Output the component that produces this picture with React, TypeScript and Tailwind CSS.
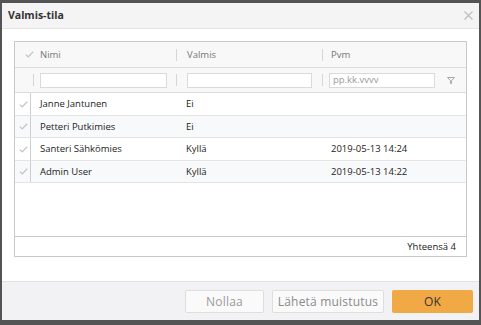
import React from "react";

const rows = [
  { name: "Janne Jantunen", valmis: "Ei", pvm: "", cls: "h-[23px] bg-white" },
  { name: "Petteri Putkimies", valmis: "Ei", pvm: "", cls: "h-[22px] bg-[#f8f9fb]" },
  { name: "Santeri Sähkömies", valmis: "Kyllä", pvm: "2019-05-13 14:24", cls: "h-[23px] bg-white" },
  { name: "Admin User", valmis: "Kyllä", pvm: "2019-05-13 14:22", cls: "h-[22px] bg-[#f8f9fb]" },
];

function Check({ className = "" }: { className?: string }) {
  return (
    <svg width="9" height="7" viewBox="0 0 9 7" className={className}>
      <path d="M0.8 3.6 L3.2 5.9 L8.2 0.8" fill="none" stroke="#c4c4c4" strokeWidth="1.3" />
    </svg>
  );
}

function Sep() {
  return <div className="w-px h-[12px] bg-[#d6d6d6]" />;
}

export default function App() {
  return (
    <div
      className="w-[481px] h-[325px] bg-[#545454] pt-[3px] pl-[2px] pr-[2px] pb-[5px]"
      style={{ fontFamily: '"Open Sans", "Noto Sans", sans-serif' }}
    >
      <div className="h-full bg-white flex flex-col">
        {/* header */}
        <div className="h-[26px] shrink-0 bg-[#f4f4f4] border-b border-[#e4e4e4] flex items-center justify-between pl-[6px] pr-[6px]">
          <span className="text-[10.5px] font-bold text-[#333] leading-none">Valmis-tila</span>
          <svg width="9" height="9" viewBox="0 0 9 9">
            <path d="M0.5 0.5 L8.5 8.5 M8.5 0.5 L0.5 8.5" stroke="#bdbdbd" strokeWidth="1.2" />
          </svg>
        </div>
        {/* body */}
        <div className="flex-1 px-[12px] pt-[12px] pb-[24px] flex flex-col">
          <div className="flex-1 border border-[#c9c9c9] flex flex-col text-[9.5px] leading-none">
            {/* grid header */}
            <div className="h-[26px] shrink-0 bg-[#f8f8f8] border-b border-[#dcdcdc] flex items-center text-[#777]">
              <div className="w-[25px] shrink-0 flex justify-end pr-[6px]">
                <Check />
              </div>
              <div className="w-[136px] shrink-0 flex items-center">
                <span>Nimi</span>
              </div>
              <div className="w-[146px] shrink-0 flex items-center">
                <Sep />
                <span className="ml-[10px]">Valmis</span>
              </div>
              <div className="flex-1 flex items-center">
                <Sep />
                <span className="ml-[8px]">Pvm</span>
              </div>
            </div>
            {/* filter row */}
            <div className="h-[25px] shrink-0 bg-[#f8f8f8] border-b border-[#dcdcdc] flex items-center">
              <div className="w-[18px] shrink-0" />
              <Sep />
              <div className="w-[6px] shrink-0" />
              <div className="w-[127px] shrink-0 h-[15px] bg-white border border-[#dadada]" />
              <div className="w-[9px] shrink-0" />
              <Sep />
              <div className="w-[10px] shrink-0" />
              <div className="w-[125px] shrink-0 h-[15px] bg-white border border-[#dadada]" />
              <div className="w-[10px] shrink-0" />
              <Sep />
              <div className="w-[6px] shrink-0" />
              <div className="w-[106px] shrink-0 h-[15px] bg-white border border-[#dadada] flex items-center pl-[3px] text-[#9a9a9a]">
                pp.kk.vvvv
              </div>
              <div className="flex-1 flex justify-center">
                <svg width="8" height="7" viewBox="0 0 8 7">
                  <path d="M0.5 0.5 H7.5 L4.6 3.6 V6.5 H3.4 V3.6 Z" fill="none" stroke="#9f9f9f" strokeWidth="0.9" />
                </svg>
              </div>
            </div>
            {/* data rows */}
            {rows.map((r) => (
              <div key={r.name} className={`${r.cls} shrink-0 border-b border-[#e4e4e4] flex items-center text-[#222]`}>
                <div className="w-[16px] h-full shrink-0 border-r border-[#cfcfcf] flex items-center justify-center pl-[2px]">
                  <Check />
                </div>
                <div className="w-[145px] shrink-0 pl-[9px]">{r.name}</div>
                <div className="w-[146px] shrink-0 pl-[10px]">{r.valmis}</div>
                <div className="flex-1 pl-[9px]">{r.pvm}</div>
              </div>
            ))}
            <div className="flex-1" />
            {/* footer */}
            <div className="h-[20px] shrink-0 border-t border-[#c9c9c9] flex items-center justify-end pr-[10px] text-[#222]">
              Yhteensä 4
            </div>
          </div>
        </div>
        {/* dialog footer */}
        <div className="h-[39px] shrink-0 bg-[#f2f2f4] border-t border-[#e2e2e2] flex items-start justify-end gap-[8px] pt-[8px] pr-[6px] text-[12px] tracking-[0.2px]">
          <button className="w-[79px] h-[23px] bg-[#fafafa] border border-[#dedede] rounded-[2px] text-[#9a9a9a]">
            Nollaa
          </button>
          <button className="w-[112px] h-[23px] bg-[#fafafa] border border-[#dedede] rounded-[2px] text-[#8a8a8a]">
            Lähetä muistutus
          </button>
          <button className="w-[81px] h-[23px] bg-[#f0a945] rounded-[2px] text-[#333]">
            OK
          </button>
        </div>
      </div>
    </div>
  );
}
